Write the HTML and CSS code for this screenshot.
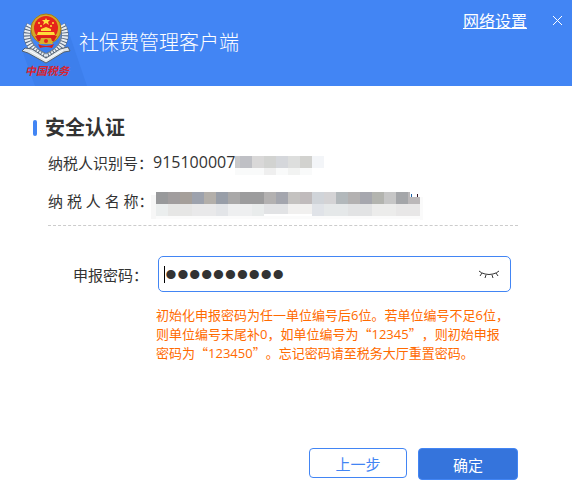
FILE: index.html
```html
<!DOCTYPE html>
<html lang="zh-CN">
<head>
  <meta charset="UTF-8" />
  <meta name="viewport" content="width=device-width, initial-scale=1.0" />
  <title>社保费管理客户端</title>
  <link rel="stylesheet" href="styles.css">
</head>
<body>
  <header class="header">
    <svg class="logo" width="90" height="86" viewBox="0 0 90 86" aria-hidden="true">
      <path d="M22 50 L70 36 L87 86 L35 86 Z" fill="#3d7fec" />
      <!-- wheat wreath -->
      <path d="M30 25 C23 36 28 50 46 57 C64 50 69 36 62 25" fill="none" stroke="#56677f" stroke-width="7" />
      <path d="M30 25 C23 36 28 50 46 57 C64 50 69 36 62 25" fill="none" stroke="#e8edf2" stroke-width="6" stroke-dasharray="2 1" />
      <path d="M33 29 C28 38 33 48 46 54 C59 48 64 38 59 29" fill="none" stroke="#7c8998" stroke-width="1" />
      <!-- ribbon -->
      <path d="M22 51 L25 48 L32 49 L46 58 L60 49 L68 47 L70 51 L64 52 L46 63 L28 53 Z" fill="#dfe4e8" stroke="#53606e" stroke-width="1" />
      <path d="M30 51 L46 60 L63 50" fill="none" stroke="#fff" stroke-width="1" />
      <!-- emblem -->
      <circle cx="46" cy="29" r="15" fill="#d5a928" stroke="#a67c16" stroke-width="1" />
      <circle cx="46" cy="28" r="12" fill="#e5241b" />
      <path d="M46 18 l1 2 h3 l-2 2 1 3 -3 -2 -3 2 1 -3 -2 -2 h3 Z" fill="#ffe23c" />
      <g fill="#ffdc3a">
        <circle cx="39" cy="23" r="1" />
        <circle cx="53" cy="23" r="1" />
        <circle cx="41" cy="26" r="1" />
        <circle cx="51" cy="26" r="1" />
        <path d="M41 29 L46 27 L51 29 V31 H41 Z M38 32 H54 L55 35 H37 Z" />
      </g>
      <path d="M35 36 H57 L54 41 H38 Z" fill="#d92018" />
      <path d="M41 38 H51 L53 44 H39 Z" fill="#d9ae2c" />
      <circle cx="46" cy="41" r="2" fill="#e5241b" />
      <path d="M38 44 Q46 48 54 44 L52 48 Q46 46 40 48 Z" fill="#d92018" />
      <text class="logo-text" x="25" y="75">中国税务</text>
    </svg>
    <h1>社保费管理客户端</h1>
    <a class="network" href="#">网络设置</a>
    <button class="close" type="button" aria-label="关闭">
      <svg width="11" height="11" viewBox="0 0 11 11"><path d="M1 1 L10 10 M10 1 L1 10" stroke="#fff" stroke-width="1" /></svg>
    </button>
  </header>

  <main class="content">
    <h2>安全认证</h2>

    <dl class="taxpayer">
      <div class="info-row">
        <dt>纳税人识别号：</dt>
        <dd>
          <span class="tax-no">915100007</span>
          <svg class="mask-no" width="89" height="20" viewBox="0 0 89 20" shape-rendering="crispEdges" aria-hidden="true">
            <rect x="0" y="0" width="5" height="12" fill="#c9c9ca" />
            <rect x="5" y="0" width="12" height="12" fill="#bfc0c5" />
            <rect x="17" y="0" width="12" height="12" fill="#d9d8d8" />
            <rect x="29" y="0" width="12" height="12" fill="#d2d3d1" />
            <rect x="41" y="0" width="12" height="12" fill="#d5d7db" />
            <rect x="53" y="0" width="12" height="12" fill="#dddedd" />
            <rect x="65" y="0" width="12" height="12" fill="#d2d2cf" />
            <rect x="77" y="0" width="12" height="12" fill="#f3f5f8" />
            <rect x="0" y="12" width="77" height="7" fill="#f9fafa" />
            <rect x="29" y="12" width="12" height="7" fill="#efefef" />
            <rect x="53" y="12" width="12" height="7" fill="#f2f3f2" />
          </svg>
        </dd>
      </div>
      <div class="info-row">
        <dt>纳 税 人 名 称：</dt>
        <dd>
          <svg class="mask-name" width="272" height="28" viewBox="0 0 272 28" shape-rendering="crispEdges" aria-hidden="true">
            <rect x="0" y="3" width="5" height="24" fill="#f7f7f7" />
            <rect x="5" y="24" width="267" height="3" fill="#fbfbfb" />
            <rect x="269" y="5" width="3" height="23" fill="#fafafa" />
            <rect x="5" y="0" width="12" height="12" fill="#98999b" />
            <rect x="17" y="0" width="12" height="12" fill="#a19d9e" />
            <rect x="29" y="0" width="12" height="12" fill="#a59f9a" />
            <rect x="41" y="0" width="12" height="12" fill="#9da2ad" />
            <rect x="53" y="0" width="12" height="12" fill="#b3afaa" />
            <rect x="65" y="0" width="12" height="12" fill="#989ea8" />
            <rect x="77" y="0" width="12" height="12" fill="#a9a8a8" />
            <rect x="89" y="0" width="24" height="12" fill="#9c9c9d" />
            <rect x="113" y="0" width="12" height="12" fill="#b3b1b1" />
            <rect x="125" y="0" width="12" height="12" fill="#a4a6ae" />
            <rect x="137" y="0" width="12" height="12" fill="#c4c2c0" />
            <rect x="149" y="0" width="12" height="12" fill="#c0bbbc" />
            <rect x="161" y="0" width="12" height="12" fill="#d0d4d9" />
            <rect x="173" y="0" width="12" height="12" fill="#d4d3d5" />
            <rect x="185" y="0" width="12" height="12" fill="#b2b8bb" />
            <rect x="197" y="0" width="12" height="12" fill="#b3b1b1" />
            <rect x="209" y="0" width="12" height="12" fill="#a6a7ae" />
            <rect x="221" y="0" width="12" height="12" fill="#b3b4af" />
            <rect x="233" y="0" width="12" height="12" fill="#c6c6c6" />
            <rect x="245" y="0" width="12" height="12" fill="#a4a6a9" />
            <rect x="257" y="0" width="2" height="12" fill="#bbb8b9" />
            <rect x="257" y="5" width="12" height="7" fill="#bbb8b9" />
            <rect x="260" y="2" width="1" height="3" fill="#1c62a8" />
            <rect x="266" y="2" width="1" height="3" fill="#331020" />
            <rect x="5" y="12" width="12" height="12" fill="#ebeeee" />
            <rect x="17" y="12" width="24" height="12" fill="#e6e6e5" />
            <rect x="41" y="12" width="36" height="12" fill="#e9e9ea" />
            <rect x="65" y="12" width="12" height="12" fill="#e3e5e8" />
            <rect x="77" y="12" width="24" height="12" fill="#eeeff0" />
            <rect x="101" y="12" width="12" height="12" fill="#e9ecec" />
            <rect x="113" y="12" width="24" height="10" fill="#e2e3e5" />
            <rect x="137" y="12" width="24" height="10" fill="#f1f0ef" />
            <rect x="161" y="12" width="12" height="12" fill="#e0e3e8" />
            <rect x="173" y="12" width="24" height="12" fill="#e5e8e9" />
            <rect x="197" y="12" width="24" height="12" fill="#e2e3e4" />
            <rect x="221" y="12" width="24" height="12" fill="#ececeb" />
            <rect x="245" y="12" width="24" height="12" fill="#e8e7e7" />
          </svg>
        </dd>
      </div>
    </dl>

    <form class="login">
      <div class="field">
        <label for="password">申报密码：</label>
        <div class="input-box">
          <input type="password" id="password" value="1234567890" />
          <button class="eye" type="button" aria-label="显示密码">
            <svg width="22" height="10" viewBox="0 0 22 10" fill="none" stroke="#333" stroke-width="1">
              <path d="M1 2 Q3 4 7 5 Q11 6 15 5 Q19 4 21 2 M4 4 L2 7 M8 6 L7 9 M14 6 L15 9 M18 4 L20 7" />
            </svg>
          </button>
        </div>
      </div>
      <p class="hint">初始化申报密码为任一单位编号后<span class="num">6</span>位。若单位编号不足<span class="num">6</span>位，<br>则单位编号末尾补<span class="num">0</span>，如单位编号为“<span class="num">12345</span>”，则初始申报<br>密码为“<span class="num">123450</span>”。忘记密码请至税务大厅重置密码。</p>
      <div class="buttons">
        <button class="btn prev" type="button">上一步</button>
        <button class="btn ok" type="submit">确定</button>
      </div>
    </form>
  </main>
</body>
</html>
```
FILE: styles.css
```css
* {
  box-sizing: border-box;
}
body {
  margin: 0;
  font-family: "Open Sans", "Noto Sans CJK SC", sans-serif;
  font-size: 15px;
  color: #333;
  background: #fff;
}
button {
  font-family: inherit;
  padding: 0;
  border: 0;
  background: none;
  cursor: pointer;
}
svg {
  display: block;
}
.header {
  display: flex;
  height: 86px;
  background: #4285f4;
  color: #fff;
}
.logo {
  flex: none;
}
.logo-text {
  font-family: "Noto Sans CJK SC", sans-serif;
  font-size: 11px;
  font-style: italic;
  font-weight: bold;
  fill: #d8232f;
}
h1 {
  margin: 29px auto 0 -11px;
  font-size: 20px;
  font-weight: 300;
  line-height: 28px;
}
.network {
  margin-top: 10px;
  font-size: 16px;
  line-height: 22px;
  color: #fff;
}
.close {
  width: 11px;
  height: 11px;
  margin: 15px 9px 0 25px;
}
.content {
  padding: 29px 54px 16px 33px;
}
h2 {
  display: flex;
  align-items: center;
  gap: 8px;
  margin: 0;
  font-size: 20px;
  line-height: 26px;
}
h2::before {
  content: "";
  width: 4px;
  height: 16px;
  border-radius: 2px;
  background: #4285f4;
}
.taxpayer {
  margin: 2px 0 0 15px;
  padding-bottom: 6px;
  border-bottom: 1px dashed #ccc;
}
.info-row {
  display: flex;
  align-items: center;
  height: 38px;
}
dt {
  width: 105px;
  white-space: nowrap;
}
dd {
  display: flex;
  align-items: center;
  margin: 0;
}
.tax-no {
  font-size: 16px;
}
.mask-no {
  margin-top: 8px;
}
.mask-name {
  margin: 12px 0 0 -2px;
}
.login {
  padding-top: 30px;
}
.field {
  display: flex;
  align-items: center;
  margin-right: 7px;
}
label {
  flex: none;
  width: 125px;
  padding-left: 40px;
  white-space: nowrap;
}
.input-box {
  position: relative;
  display: flex;
  flex: 1;
  align-items: center;
  min-width: 0;
  height: 36px;
  padding: 0 10px 0 6px;
  border: 1px solid #4285f4;
  border-radius: 5px;
}
/* text cursor */
.input-box::before {
  content: "";
  position: absolute;
  left: 5px;
  width: 1px;
  height: 17px;
  background: #000;
}
#password {
  flex: 1;
  min-width: 0;
  height: 34px;
  padding: 0;
  border: 0;
  outline: 0;
  background: none;
  font-family: "Liberation Sans", sans-serif;
  font-size: 34px;
  line-height: 34px;
  color: #333;
}
.hint {
  margin: 13px 0 0 123px;
  font-family: "Noto Sans CJK SC", sans-serif;
  font-size: 13px;
  line-height: 19px;
  color: #ff6a00;
  white-space: nowrap;
  text-spacing-trim: space-all;
}
.num {
  font-family: "Open Sans", sans-serif;
  line-height: 1;
}
.buttons {
  display: flex;
  justify-content: flex-end;
  align-items: flex-start;
  gap: 11px;
  margin-top: 86px;
}
.btn {
  width: 98px;
  height: 30px;
  border: 1px solid #4285f4;
  border-radius: 4px;
  font-size: 15px;
  color: #4285f4;
}
.btn.ok {
  width: 100px;
  height: 32px;
  background: #3574dc;
  color: #fff;
}
```
